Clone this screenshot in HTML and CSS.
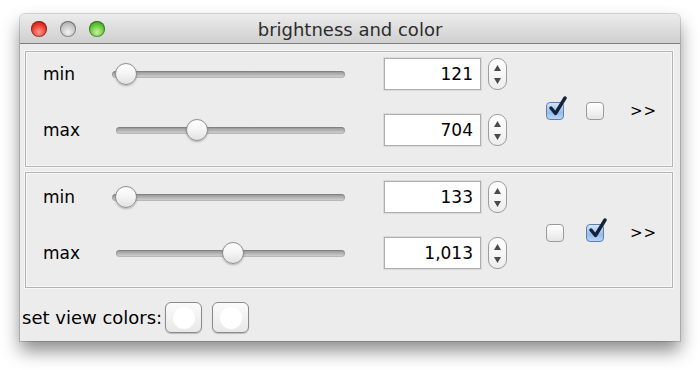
FILE: index.html
```html
<!DOCTYPE html>
<html>
<head>
  <meta charset="utf-8">
  <title>brightness and color</title>
  <link rel="stylesheet" href="styles.css">
</head>
<body>
  <div class="window">
    <div class="titlebar">
      <div class="lights">
        <span class="light red"></span>
        <span class="light gray"></span>
        <span class="light green"></span>
      </div>
      <div class="title">brightness and color</div>
    </div>

    <div class="content">
      <div class="panel">
        <div class="rows">
          <div class="row">
            <span class="label">min</span>
            <div class="slider slider-min"><div class="thumb" style="left: 3px;"></div></div>
            <input class="field" type="text" value="121">
            <div class="stepper">
              <svg width="9" height="8" viewBox="0 0 9 8"><path d="M4.5 1 L8 7 L1 7 Z" fill="#4a4a4a"/></svg>
              <svg width="9" height="8" viewBox="0 0 9 8"><path d="M1 1 L8 1 L4.5 7 Z" fill="#4a4a4a"/></svg>
            </div>
          </div>
          <div class="row">
            <span class="label">max</span>
            <div class="slider slider-max"><div class="thumb" style="left: 70px;"></div></div>
            <input class="field" type="text" value="704">
            <div class="stepper">
              <svg width="9" height="8" viewBox="0 0 9 8"><path d="M4.5 1 L8 7 L1 7 Z" fill="#4a4a4a"/></svg>
              <svg width="9" height="8" viewBox="0 0 9 8"><path d="M1 1 L8 1 L4.5 7 Z" fill="#4a4a4a"/></svg>
            </div>
          </div>
        </div>
        <div class="options">
          <span class="check checked">
            <svg class="tick" width="20" height="22" viewBox="0 0 20 22"><path d="M3 12 L7.5 17.5 L17 2" fill="none" stroke="#13233a" stroke-width="3.4" stroke-linecap="round" stroke-linejoin="round"/></svg>
          </span>
          <span class="check"></span>
          <span class="more">&gt;&gt;</span>
        </div>
      </div>

      <div class="panel panel-second">
        <div class="rows">
          <div class="row">
            <span class="label">min</span>
            <div class="slider slider-min"><div class="thumb" style="left: 3px;"></div></div>
            <input class="field" type="text" value="133">
            <div class="stepper">
              <svg width="9" height="8" viewBox="0 0 9 8"><path d="M4.5 1 L8 7 L1 7 Z" fill="#4a4a4a"/></svg>
              <svg width="9" height="8" viewBox="0 0 9 8"><path d="M1 1 L8 1 L4.5 7 Z" fill="#4a4a4a"/></svg>
            </div>
          </div>
          <div class="row">
            <span class="label">max</span>
            <div class="slider slider-max"><div class="thumb" style="left: 106px;"></div></div>
            <input class="field" type="text" value="1,013">
            <div class="stepper">
              <svg width="9" height="8" viewBox="0 0 9 8"><path d="M4.5 1 L8 7 L1 7 Z" fill="#4a4a4a"/></svg>
              <svg width="9" height="8" viewBox="0 0 9 8"><path d="M1 1 L8 1 L4.5 7 Z" fill="#4a4a4a"/></svg>
            </div>
          </div>
        </div>
        <div class="options">
          <span class="check"></span>
          <span class="check checked">
            <svg class="tick" width="20" height="22" viewBox="0 0 20 22"><path d="M3 12 L7.5 17.5 L17 2" fill="none" stroke="#13233a" stroke-width="3.4" stroke-linecap="round" stroke-linejoin="round"/></svg>
          </span>
          <span class="more">&gt;&gt;</span>
        </div>
      </div>

      <div class="footer">
        <span class="footer-label">set view colors:</span>
        <button class="well"><span class="swatch"></span></button>
        <button class="well"><span class="swatch"></span></button>
      </div>
    </div>
  </div>
</body>
</html>
```

FILE: styles.css
```css
html, body {
  height: 370px;
}
body {
  margin: 0;
  padding-top: 14px;
  box-sizing: border-box;
  background: #fff;
  font-family: "DejaVu Sans", "Liberation Sans", sans-serif;
  color: #000;
}
.window {
  margin-left: 20px;
  width: 660px;
  height: 327px;
  background: #ececec;
  border-radius: 5px 5px 0 0;
  box-shadow: 0 0 0 1px rgba(0,0,0,0.15), 0 10px 18px rgba(0,0,0,0.45);
  overflow: hidden;
}
.titlebar {
  position: relative;
  height: 29px;
  background: linear-gradient(#ececec, #cfcfcf);
  border-bottom: 1px solid #7e7e7e;
  display: flex;
  align-items: center;
  justify-content: center;
}
.lights {
  position: absolute;
  left: 11px;
  top: 7px;
  display: flex;
  gap: 13px;
}
.light {
  width: 16px;
  height: 16px;
  border-radius: 50%;
  box-shadow: inset 0 0 0 1px rgba(0,0,0,0.35);
}
.light.red {
  background: radial-gradient(circle at 50% 70%, #ff9a8c 0, #e8352b 55%, #b0140e 100%);
}
.light.gray {
  background: radial-gradient(circle at 50% 70%, #f2f2f2 0, #c3c3c3 55%, #8e8e8e 100%);
}
.light.green {
  background: radial-gradient(circle at 50% 70%, #c8f59a 0, #5fc33a 55%, #2b8a16 100%);
}
.title {
  font-size: 18px;
  color: #2c2c2c;
  margin-top: 1px;
}
.content {
  padding: 7px 7px 0 5px;
}
.panel {
  height: 116px;
  box-sizing: border-box;
  border: 1px solid #b4b4b4;
  box-shadow: 0 0 0 1px #f7f7f7, inset 0 0 0 1px #f7f7f7;
  display: flex;
  align-items: flex-start;
  padding-top: 6px;
  margin-bottom: 5px;
}
.panel-second {
  padding-top: 8px;
}
.rows {
  display: flex;
  flex-direction: column;
  gap: 24px;
  padding-left: 17px;
}
.row {
  display: flex;
  align-items: center;
  height: 32px;
}
.label {
  width: 69px;
  font-size: 17px;
}
.slider {
  position: relative;
  height: 7px;
  border-radius: 4px;
  background: linear-gradient(#8e8e8e, #bdbdbd 60%, #d6d6d6);
  box-shadow: inset 0 0 0 1px rgba(0,0,0,0.12);
}
.slider-min {
  width: 233px;
}
.slider-max {
  width: 229px;
  margin-left: 4px;
}
.thumb {
  position: absolute;
  top: -8px;
  width: 22px;
  height: 22px;
  box-sizing: border-box;
  border-radius: 50%;
  border: 1px solid #8f8f8f;
  background: linear-gradient(#ffffff, #f4f4f4 50%, #e2e2e2);
  box-shadow: 0 1px 2px rgba(0,0,0,0.25);
}
.field {
  margin-left: 39px;
  width: 97px;
  height: 32px;
  box-sizing: border-box;
  border: 1px solid #aeaeae;
  box-shadow: 0 0 0 1px #dadada;
  background: #fff;
  font-family: "DejaVu Sans", "Liberation Sans", sans-serif;
  font-size: 17px;
  text-align: right;
  padding: 0 7px 0 0;
  color: #000;
  outline: none;
}
.stepper {
  margin-left: 7px;
  width: 19px;
  height: 32px;
  box-sizing: border-box;
  border: 1px solid #9c9c9c;
  border-radius: 9px;
  background: linear-gradient(#ffffff, #ededed);
  display: flex;
  flex-direction: column;
  align-items: center;
  justify-content: space-between;
  padding: 5px 0 4px;
}
.options {
  align-self: center;
  display: flex;
  align-items: center;
  margin-left: 39px;
  margin-top: -2px;
}
.check {
  position: relative;
  width: 18px;
  height: 18px;
  box-sizing: border-box;
  border: 1px solid #9a9a9a;
  border-radius: 4px;
  background: linear-gradient(#ffffff, #e6e6e6);
  margin-right: 22px;
}
.check.checked {
  border-color: #5b7fae;
  background: linear-gradient(#d4e6fa, #94bdea 60%, #b8d6f6);
}
.tick {
  position: absolute;
  left: 1px;
  top: -7px;
}
.more {
  margin-left: 4px;
  font-size: 15px;
  letter-spacing: 1px;
}
.footer {
  display: flex;
  align-items: center;
  margin: 14px 0 0 -3px;
}
.footer-label {
  font-size: 18px;
  margin-right: 3px;
}
.well {
  width: 37px;
  height: 31px;
  margin: 0 10px 0 0;
  padding: 0;
  border: 1px solid #8a8a8a;
  border-radius: 6px;
  background: linear-gradient(#fbfbfb, #e8e8e8);
  box-shadow: 0 1px 1px rgba(0,0,0,0.2);
  display: flex;
  align-items: center;
  justify-content: center;
}
.swatch {
  width: 22px;
  height: 22px;
  border-radius: 50%;
  background: #fff;
}
```
